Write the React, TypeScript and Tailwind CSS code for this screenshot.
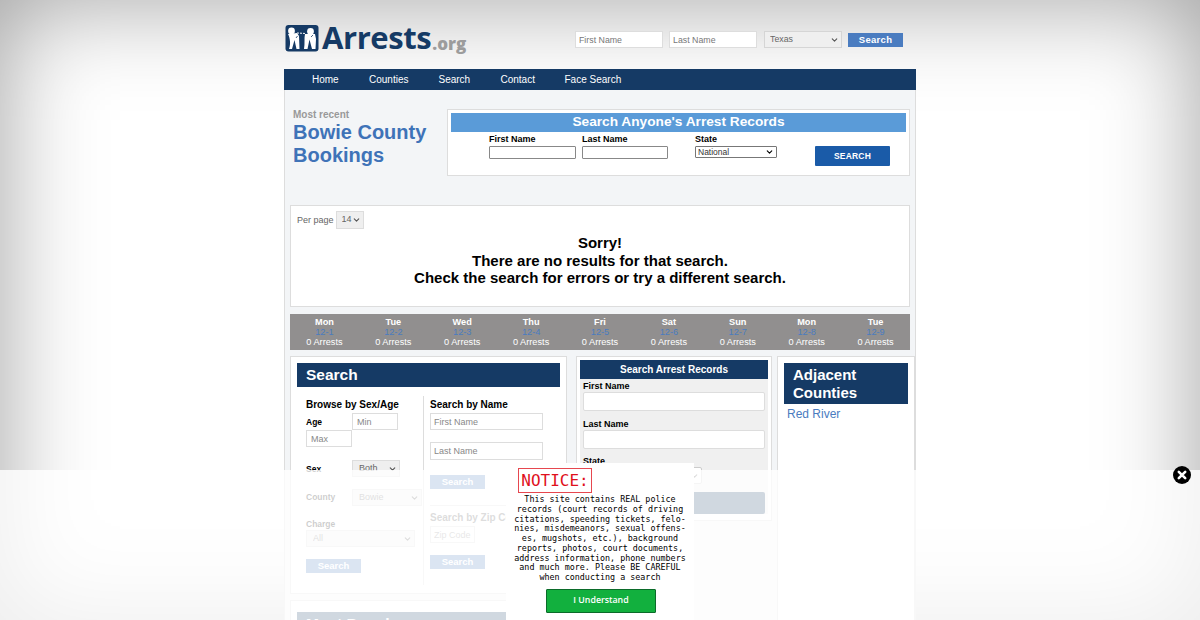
import React from 'react';
import { ChevronDown } from 'lucide-react';

const days = [
  { day: 'Mon', date: '12-1' },
  { day: 'Tue', date: '12-2' },
  { day: 'Wed', date: '12-3' },
  { day: 'Thu', date: '12-4' },
  { day: 'Fri', date: '12-5' },
  { day: 'Sat', date: '12-6' },
  { day: 'Sun', date: '12-7' },
  { day: 'Mon', date: '12-8' },
  { day: 'Tue', date: '12-9' },
];

const noticeLines = [
  'This site contains REAL police',
  'records (court records of driving',
  'citations, speeding tickets, felo-',
  'nies, misdemeanors, sexual offens-',
  'es, mugshots, etc.), background',
  'reports, photos, court documents,',
  'address information, phone numbers',
  'and much more. Please BE CAREFUL',
  'when conducting a search',
];

const Select = ({ value, className, chevron = 'text-[#555]' }: { value: string; className: string; chevron?: string }) => (
  <div className="relative block w-fit">
    <select defaultValue={value} className={`block appearance-none ${className}`}>
      <option>{value}</option>
    </select>
    <ChevronDown size={9} strokeWidth={3} className={`pointer-events-none absolute top-1/2 right-[3px] -translate-y-1/2 ${chevron}`} />
  </div>
);

const Logo = () => (
  <div className="flex items-center">
    <svg width="34" height="27" viewBox="0 0 34 27" className="mt-[1px] shrink-0">
      <rect x="0.5" y="0" width="33" height="26.5" rx="3" fill="#153a65" />
      <circle cx="6.5" cy="6" r="3.4" fill="#fff" />
      <circle cx="25.5" cy="6.5" r="3.4" fill="#fff" />
      <path d="M3 9 L12 8 L14 11 L14.5 24 L4 24 C6 19 5 13 3 9 Z" fill="#fff" />
      <path d="M20 9 L30 9 L31 14 L30.5 24 L19 24 C20 19 19 13 20 9 Z" fill="#fff" />
      <path d="M12 8 L21 8.5" stroke="#fff" strokeWidth="1" strokeDasharray="2 1" fill="none" />
      <path d="M7 24 L9.5 15 L11.5 24 Z M22.5 24 L24.5 14.5 L27 24 Z" fill="#153a65" />
      <path d="M11 13 L12.5 11 M26 12 L28 10" stroke="#153a65" strokeWidth="0.8" fill="none" />
    </svg>
    <span className="ml-[3px] font-['Open_Sans',sans-serif] text-[31px] leading-none font-bold tracking-[-0.4px] text-[#153a65]">Arrests</span>
    <span className="mt-[11px] ml-[1px] font-['Open_Sans',sans-serif] text-[17px] leading-none font-extrabold text-[#9c9c9c]">.org</span>
  </div>
);

const CloseIcon = () => (
  <svg width="18" height="18" viewBox="0 0 18 18">
    <circle cx="9" cy="9" r="9" fill="#000" />
    <path d="M5.8 5.8 L12.2 12.2 M12.2 5.8 L5.8 12.2" stroke="#fff" strokeWidth="2.6" strokeLinecap="round" />
  </svg>
);

export default function App() {
  return (
    <div className="relative h-[620px] overflow-hidden bg-white font-['Liberation_Sans',Arial,sans-serif] shadow-[inset_0_0_100px_rgba(0,0,0,0.38)]">
      <div className="mx-auto w-[632px]">
        {/* Header */}
        <div className="flex h-[69px]">
          <div className="pt-[22px] pl-[1px]">
            <Logo />
          </div>
          <div className="mr-[13px] ml-auto flex items-start gap-[6px] pt-[31px]">
            <input placeholder="First Name" className="block h-[17px] w-[88px] border border-[#ddd] bg-white px-[3px] text-[8.8px] placeholder:text-[#777]" />
            <input placeholder="Last Name" className="block h-[17px] w-[88px] border border-[#ddd] bg-white px-[3px] text-[8.8px] placeholder:text-[#777]" />
            <div className="ml-[1px]">
              <Select value="Texas" className="h-[17px] w-[78px] border border-[#d5d5d5] bg-[#efefef] px-[5px] text-[8.8px] text-[#666]" />
            </div>
            <button className="mt-[2px] h-[14px] w-[55px] bg-[#4a7cc0] text-[9.5px] leading-none font-bold tracking-[0.3px] text-white">Search</button>
          </div>
        </div>

        {/* Nav */}
        <nav className="flex h-[21px] items-center bg-[#153a65] pl-[28px] text-[10px] text-white">
          <span className="w-[57px]">Home</span>
          <span className="w-[69.5px]">Counties</span>
          <span className="w-[62px]">Search</span>
          <span className="w-[64px]">Contact</span>
          <span>Face Search</span>
        </nav>

        {/* Body */}
        <div className="h-[530px] border-x border-[#ddd] bg-[#f3f5f7] pl-[5px]">
          <div className="flex h-[115px] w-[620px] items-start">
            <div className="w-[157px] pt-[19px] pl-[3px]">
              <div className="text-[10px] leading-[12px] font-bold text-[#999]">Most recent</div>
              <h1 className="text-[20px] leading-[23px] font-bold text-[#3f73b8]">Bowie County Bookings</h1>
            </div>
            <div className="mt-[19px] h-[67px] w-[463px] border border-[#ddd] bg-white p-[3px]">
              <div className="h-[19px] bg-[#5a9bd8] text-center text-[13.7px] leading-[18px] font-bold text-white">Search Anyone's Arrest Records</div>
              <div className="flex pl-[38px]">
                <div className="mt-[1px] w-[93px]">
                  <div className="text-[9px] leading-[13px] font-bold text-black">First Name</div>
                  <input className="block h-[13px] w-[87px] rounded-[1px] border border-[#888] bg-white" />
                </div>
                <div className="mt-[1px] w-[113px]">
                  <div className="text-[9px] leading-[13px] font-bold text-black">Last Name</div>
                  <input className="block h-[13px] w-[86px] rounded-[1px] border border-[#888] bg-white" />
                </div>
                <div className="mt-[1px] w-[120px]">
                  <div className="text-[9px] leading-[13px] font-bold text-black">State</div>
                  <Select value="National" chevron="text-black" className="h-[12px] w-[82px] rounded-[1px] border border-[#777] bg-white pl-[2px] text-[8.5px] leading-none text-[#333]" />
                </div>
                <button className="mt-[14px] h-[20px] w-[75px] rounded-[1px] bg-[#1a5ba8] text-[8.5px] font-bold tracking-[0.2px] text-white">SEARCH</button>
              </div>
            </div>
          </div>

          {/* Results */}
          <div className="h-[102px] w-[620px] border border-[#ddd] bg-white">
            <div className="flex items-center gap-[2px] pt-[5px] pl-[6px] text-[9px] text-[#666]">
              <span className="mt-[1px]">Per page</span>
              <Select value="14" className="h-[18px] w-[28px] border border-[#ddd] bg-[#efefef] pl-[5px] text-[9px] text-[#666]" />
            </div>
            <div className="mt-[5px] text-center text-[15px] leading-[17.5px] font-bold text-black">
              <div>Sorry!</div>
              <div>There are no results for that search.</div>
              <div>Check the search for errors or try a different search.</div>
            </div>
          </div>

          {/* Calendar strip */}
          <div className="mt-[7px] grid h-[36px] w-[620px] grid-cols-9 bg-[#918f8f] pt-[3px] text-center text-[9.2px] leading-[10px] text-white">
            {days.map((d) => (
              <div key={d.date} className="flex flex-col">
                <span className="font-bold">{d.day}</span>
                <span className="text-[#4a7cc0]">{d.date}</span>
                <span>0 Arrests</span>
              </div>
            ))}
          </div>

          {/* Columns */}
          <div className="mt-[6px] flex">
            <div className="w-[277px]">
              <div className="h-[238px] border border-[#ddd] bg-white px-[6px] pt-[6px]">
                <div className="h-[24px] bg-[#153a65] pl-[9px] text-[15.5px] leading-[23px] font-bold text-white">Search</div>
                <div className="mt-[9px] flex h-[189px]">
                  <div className="w-[127px] border-r border-[#ddd] pl-[9px]">
                    <h3 className="text-[10px] leading-[17px] font-bold text-black">Browse by Sex/Age</h3>
                    <div className="flex flex-wrap">
                      <label className="w-[46px] pt-[2px] text-[8.5px] leading-[14px] font-bold text-black">Age</label>
                      <input placeholder="Min" className="block h-[17px] w-[46px] border border-[#ddd] px-[4px] text-[9px] placeholder:text-[#888]" />
                      <input placeholder="Max" className="block h-[17px] w-[46px] border border-[#ddd] px-[4px] text-[9px] placeholder:text-[#888]" />
                    </div>
                    <div className="mt-[13px] flex items-center">
                      <label className="mt-[1px] w-[46px] text-[8.5px] font-bold text-black">Sex</label>
                      <Select value="Both" className="h-[17px] w-[48px] border border-[#ddd] bg-[#efefef] pl-[6px] text-[9px] text-[#666]" />
                    </div>
                    <div className="mt-[12px] flex items-center">
                      <label className="w-[46px] text-[8.5px] font-bold text-black">County</label>
                      <Select value="Bowie" className="h-[17px] w-[70px] border border-[#ddd] bg-[#efefef] pl-[6px] text-[9px] text-[#666]" />
                    </div>
                    <label className="mt-[12px] block text-[8.5px] leading-[12px] font-bold text-black">Charge</label>
                    <Select value="All" className="h-[17px] w-[109px] border border-[#ddd] bg-[#efefef] pl-[6px] text-[9px] text-[#666]" />
                    <button className="mt-[12px] block h-[14px] w-[55px] bg-[#4a7cc0] text-[9.5px] leading-none font-bold text-white">Search</button>
                  </div>
                  <div className="pl-[6px]">
                    <h3 className="text-[10px] leading-[17px] font-bold text-black">Search by Name</h3>
                    <input placeholder="First Name" className="block h-[17px] w-[113px] border border-[#ddd] px-[3px] text-[9px] placeholder:text-[#888]" />
                    <input placeholder="Last Name" className="mt-[12px] block h-[18px] w-[113px] border border-[#ddd] px-[3px] text-[9px] placeholder:text-[#888]" />
                    <button className="mt-[15px] block h-[14px] w-[55px] bg-[#4a7cc0] text-[9.5px] leading-none font-bold text-white">Search</button>
                    <div className="mt-[16px] w-[130px] border-t border-[#ddd]" />
                    <h3 className="mt-[3px] text-[10px] leading-[17px] font-bold whitespace-nowrap text-[#555]">Search by Zip Code</h3>
                    <input placeholder="Zip Code" className="block h-[17px] w-[45px] border border-[#ddd] px-[3px] text-[9px] placeholder:text-[#888]" />
                    <button className="mt-[12px] block h-[14px] w-[55px] bg-[#4a7cc0] text-[9.5px] leading-none font-bold text-white">Search</button>
                  </div>
                </div>
              </div>
              <div className="mt-[6px] border border-[#ddd] bg-white px-[6px] pt-[11px]">
                <div className="h-[24px] bg-[#153a65] pl-[9px] text-[15.5px] leading-[23px] font-bold text-white">Most Popular</div>
              </div>
            </div>

            <div className="ml-[9px] h-[165px] w-[196px] border border-[#ddd] bg-white px-[3px] pt-[3px]">
              <div className="h-[19px] bg-[#153a65] text-center text-[10px] leading-[20px] font-bold text-white">Search Arrest Records</div>
              <div className="h-[135px] bg-[#f0f0f0] px-[3px]">
                <div className="pt-[1px] text-[9px] leading-[12px] font-bold text-black">First Name</div>
                <input className="block h-[19px] w-[182px] rounded-[2px] border border-[#ddd] bg-white" />
                <div className="mt-[6px] pt-[1px] text-[9px] leading-[12px] font-bold text-black">Last Name</div>
                <input className="block h-[19px] w-[182px] rounded-[2px] border border-[#ddd] bg-white" />
                <div className="mt-[6px] text-[9px] leading-[12px] font-bold text-black">State</div>
                <Select value=" " className="h-[17px] w-[119px] rounded-[2px] border border-[#ccc] bg-white text-[9px]" />
                <button className="mt-[8px] block h-[22px] w-[182px] rounded-[2px] bg-[#153a65]" />
              </div>
            </div>

            <div className="ml-[5px] h-[300px] w-[138px] border border-[#ddd] bg-white pt-[6px]">
              <div className="mx-[6px] h-[41px] bg-[#153a65] px-[9px] pt-[3px] text-[15px] leading-[17.5px] font-bold text-white">Adjacent Counties</div>
              <div className="mt-[3px] pl-[9px] text-[12px] leading-[14px] text-[#4a7cc0]">Red River</div>
            </div>
          </div>
        </div>
      </div>

      {/* Notice overlay */}
      <div className="absolute inset-x-0 top-[470px] bottom-0 bg-white/80" />
      <div className="absolute top-[463px] bottom-0 left-[506px] flex w-[188px] flex-col items-center bg-white font-['DejaVu_Sans_Mono',monospace]">
        <div className="mt-[5px] ml-[12px] flex h-[25px] w-[74px] items-center justify-center self-start border border-[#e6474f] text-[16px] leading-none text-[#e0101c]">NOTICE:</div>
        <div className="mt-[2px] text-center text-[8.4px] leading-[9.75px] whitespace-nowrap text-black">
          {noticeLines.map((line) => (
            <div key={line}>{line}</div>
          ))}
        </div>
        <button className="mt-[6px] ml-[2px] h-[24px] w-[110px] rounded-[1px] border border-[#0b6b2a] bg-[#12b03e] font-['Open_Sans',sans-serif] text-[8.8px] font-semibold text-white">I Understand</button>
      </div>
      <div className="absolute top-[466px] right-[9px]">
        <CloseIcon />
      </div>
    </div>
  );
}
